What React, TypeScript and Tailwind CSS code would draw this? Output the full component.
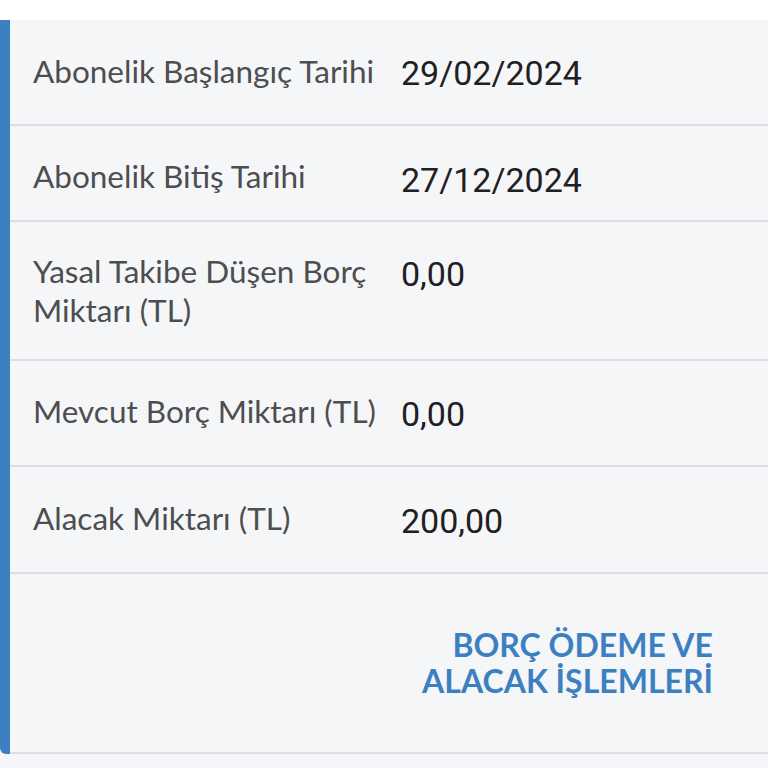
const rows = [
  { label: "Abonelik Başlangıç Tarihi", value: "29/02/2024", cls: "h-[106px] pt-[32px]", valueCls: "pt-[2px]" },
  { label: "Abonelik Bitiş Tarihi", value: "27/12/2024", cls: "h-[96px] pt-[31px]", valueCls: "pt-[4px]" },
  { label: "Yasal Takibe Düşen Borç Miktarı (TL)", value: "0,00", cls: "h-[139px] pt-[30px]", valueCls: "pt-[3px]" },
  { label: "Mevcut Borç Miktarı (TL)", value: "0,00", cls: "h-[106px] pt-[31px]", valueCls: "pt-[3px]" },
  { label: "Alacak Miktarı (TL)", value: "200,00", cls: "h-[107px] pt-[32px]", valueCls: "pt-[3px]" },
];

function Row(props: { label: string; value: string; cls: string; valueCls?: string }) {
  return (
    <div className={`flex border-b-2 border-[#dedfe2] pl-[23px] ${props.cls}`}>
      <div className="w-[368px] shrink-0 pr-[12px] text-[31.5px] leading-[39px] text-[#4d4e50] [font-family:Lato,'Noto_Sans',sans-serif]">
        {props.label}
      </div>
      <div className={`text-[34px] leading-[38px] text-[#1f2022] [font-family:Roboto,sans-serif] ${props.valueCls ?? ""}`}>
        {props.value}
      </div>
    </div>
  );
}

export default function App() {
  return (
    <div className="min-h-[768px] w-[768px] bg-[#f5f6f8]">
      <div className="h-[20px] bg-white" />
      <div className="rounded-bl-[6px] border-l-[10px] border-[#3d80c1]">
        {rows.map((r) => (
          <Row key={r.label} {...r} />
        ))}
        <div className="flex h-[180px] items-center justify-end border-b-2 border-[#dedfe2] pr-[55px]">
          <button className="text-right text-[32px] font-bold uppercase leading-[36px] text-[#3d80c1] [font-family:Lato,sans-serif]">
            BORÇ ÖDEME VE
            <br />
            ALACAK İŞLEMLERİ
          </button>
        </div>
      </div>
    </div>
  );
}
